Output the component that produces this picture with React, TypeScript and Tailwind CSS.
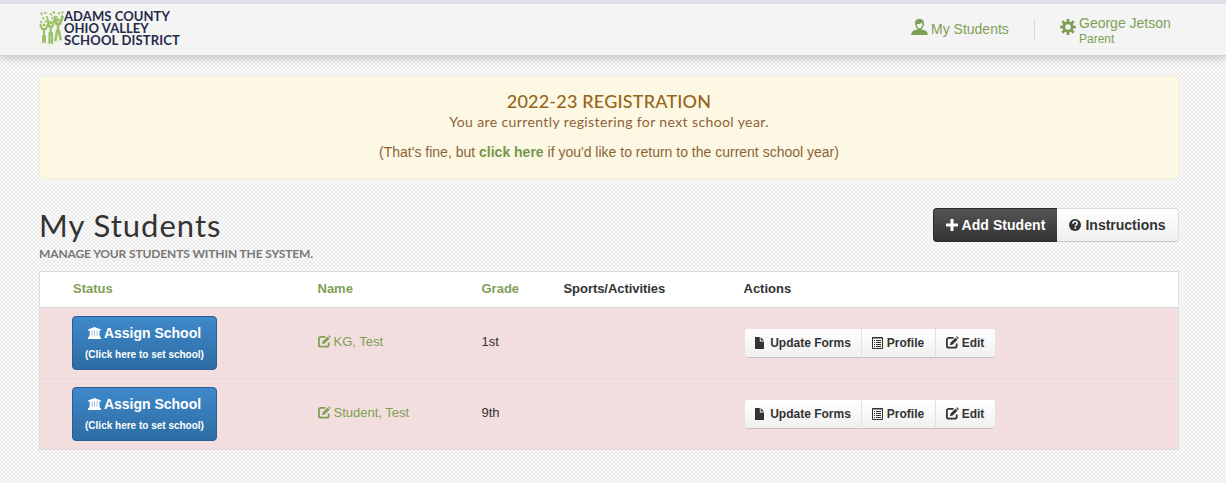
import type { ReactNode } from 'react';

type IconProps = { className?: string };

const students = [
  { id: 1, name: 'KG, Test', grade: '1st' },
  { id: 2, name: 'Student, Test', grade: '9th' },
];

const pageBackground =
  'bg-[#fafafa] bg-[radial-gradient(circle_at_center,#ebebeb_0.7px,transparent_1.1px),radial-gradient(circle_at_center,#ebebeb_0.7px,transparent_1.1px)] bg-size-[4px_4px] bg-position-[0_0,2px_2px]';

function UserIcon({ className }: IconProps) {
  return (
    <svg className={className} viewBox="0 0 17 16" fill="currentColor">
      <path d="M8.500 0C5.200 0 3.900 1.900 4.200 4.400c-.5.4-.3 1.700.5 2.300.3 1.500 1 2.500 1.800 3.200v.6C4.500 11 .2 11 .2 15.900h16.600c0-4.900-4.300-4.900-6.300-5.400v-.6c.8-.7 1.500-1.700 1.800-3.200.8-.6 1-1.900.5-2.300C13.100 1.900 11.800 0 8.500 0Z" />
      <path
        d="M5.800 4.900c2 .2 3.900-.3 4.800-1.200.1.600.4 1 .8 1.200-.1 2.700-1.400 4.400-2.900 4.400S5.900 7.600 5.800 4.900Z"
        fill="#f4f4f4"
      />
    </svg>
  );
}

function CogIcon({ className }: IconProps) {
  return (
    <svg className={className} viewBox="0 0 16 16" fill="none" stroke="currentColor">
      <circle cx="8" cy="8" r="4.300" strokeWidth="3" />
      <path
        d="M8 0v3M8 13v3M0 8h3M13 8h3M2.300 2.300l2.200 2.200M11.500 11.500l2.200 2.200M2.300 13.700l2.200-2.200M11.500 4.500l2.200-2.200"
        strokeWidth="2.700"
      />
    </svg>
  );
}

function SchoolIcon({ className }: IconProps) {
  return (
    <svg className={className} viewBox="0 0 13 12" fill="currentColor">
      <path d="M6.500 0L13 2.500v1H0v-1zM1.600 3.400h2.200V9H1.600zM4.300 3.400h2V9h-2zM6.800 3.400h2V9h-2zM9.300 3.400h2.200V9H9.300zM1 8.800h11v1.400H1zM0 10.300h13V12H0z" />
    </svg>
  );
}

function EditIcon({ className }: IconProps) {
  return (
    <svg className={className} viewBox="0 0 13 13" fill="none" stroke="currentColor">
      <path d="M7.500 1.900H2.900C1.600 1.900.9 2.600.9 3.900v5.800c0 1.300.7 2 2 2h5.800c1.300 0 2-.7 2-2V7.600" strokeWidth="1.800" />
      <path d="M4 9.200l.6-2.600 4.900-4.900 2 2-4.900 4.900z" fill="currentColor" stroke="none" />
      <path d="M10.100 1.100l.9-.9 1.900 1.900-.9.900z" fill="currentColor" stroke="none" />
    </svg>
  );
}

function FileIcon({ className }: IconProps) {
  return (
    <svg className={className} viewBox="0 0 9 12" fill="currentColor">
      <path d="M0 0h4.800v4.500H9V12H0zM5.700 0L9 3.600H5.700z" />
    </svg>
  );
}

function ListIcon({ className }: IconProps) {
  return (
    <svg className={className} viewBox="0 0 12 12" fill="none" stroke="currentColor">
      <path d="M.5.5h10v11H.5zM0 1h11" />
      <path d="M2 3.500h1M4 3.500h5M2 5.500h1M4 5.500h5M2 7.500h1M4 7.500h5M2 9.500h1M4 9.500h5" />
    </svg>
  );
}

function PlusIcon({ className }: IconProps) {
  return (
    <svg className={className} viewBox="0 0 12 12" fill="currentColor">
      <path d="M4.500 0h3v4.500H12v3H7.500V12h-3V7.500H0v-3h4.500z" />
    </svg>
  );
}

function QuestionIcon({ className }: IconProps) {
  return (
    <svg className={className} viewBox="0 0 12 12" fill="none">
      <circle cx="6" cy="6" r="6" fill="#333" />
      <path d="M3.900 4.700c0-1.400.8-2.100 2.100-2.100s2.200.7 2.200 1.800c0 1.400-1.900 1.500-1.900 2.800" stroke="#fff" strokeWidth="1.500" />
      <path d="M5.400 8.200h1.700v1.600H5.400z" fill="#fff" />
    </svg>
  );
}

function DistrictLogo() {
  return (
    <svg className="h-[36px] w-[25px]" viewBox="0 0 25 36" fill="none" stroke="#9ac068" strokeLinecap="round">
      {/* Leaves */}
      <g fill="#98c163" stroke="none">
        <path d="M1 1.500l3 .5-1.500 3zM5.500.5l3 1.500-3 1.500zM10 3l2.500-1 .5 3zM13.500 0l3 1-2 2.500zM18 2l3-1v3zM22 0l3 1-2 2.500zM2.500 7L5 6l.5 3zM6.500 5l3 .5L8 8.500zM12 6l2.500.5-1.500 2.500zM16.500 4.500L19 6l-2 2zM.5 10l3 .5L2 13zM8.500 9l2 .5-1 2zM21 5l3-1v3zM.5 15l1.500.5-1 1.500zM5.500 9.500l2 .5-1.500 2z" />
        <circle cx="5" cy="14" r="1.500" />
        <circle cx="11.700" cy="11.500" r="1.600" />
        <circle cx="19" cy="9" r="1.800" />
      </g>
      {/* Figures */}
      <path d="M1.500 14l1.500 4h4l1.500-4M5 18v7M4 25v6M6 25v6" strokeWidth="2" />
      <path d="M8.500 8.500l1.500 7h3.500l1.500-6M11.700 16v7M10.500 22v10M13 22v10" strokeWidth="2.200" />
      <path d="M15.500 6l2 7H21l2.500-7M19 13v8M18 20l-1.500 9M20 20l1.500 8" strokeWidth="2.500" />
      {/* Ground */}
      <path d="M.5 32l6 .5 4.500 3 5-4.500 7-1.500" stroke="#dbe8c9" strokeWidth="1" />
    </svg>
  );
}

function ActionButton({ className, children }: { className: string; children: ReactNode }) {
  return (
    <button
      className={`flex h-[29px] items-center justify-center border-[#e2e0e0] border-b border-b-[#c6c2c2] bg-linear-to-b from-white to-[#f0f0f0] text-[12px] font-bold text-[#333] ${className}`}
    >
      {children}
    </button>
  );
}

function Header() {
  return (
    <header className="relative flex h-[56px] justify-between border-t-4 border-b border-t-[#dde0e7] border-b-[#d2d2d2] bg-[#f4f4f4] pr-[55px] pl-[39px] shadow-[0_2px_9px_rgba(0,0,0,0.2)]">
      <div className="flex pt-[7px]">
        <DistrictLogo />
        <div className="-mt-px font-['Lato',sans-serif] text-[13px] leading-[12px] font-bold whitespace-nowrap text-[#252b4b]">
          <div className="tracking-[0.08px]">ADAMS COUNTY</div>
          <div className="tracking-[0.05px]">OHIO VALLEY</div>
          <div className="tracking-[0.16px]">SCHOOL DISTRICT</div>
        </div>
      </div>

      <nav className="flex text-[#7f9f56]">
        <a className="flex pt-[16px]" href="#">
          <UserIcon className="-mt-px mr-[3px] h-[16px] w-[17px]" />
          <span className="w-[78px] text-[14px] leading-[19px] whitespace-nowrap">My Students</span>
        </a>
        <div className="mt-[15px] ml-[25px] h-[21px] w-px bg-[#d9d9d9]" />
        <a className="ml-[25px] flex pt-[10px]" href="#">
          <CogIcon className="mt-[5px] mr-[3px] size-[16px]" />
          <span className="w-[92px] whitespace-nowrap">
            <span className="block text-[14px] leading-[18px]">George Jetson</span>
            <span className="block text-[12px] leading-[14px]">Parent</span>
          </span>
        </a>
      </nav>
    </header>
  );
}

export default function App() {
  return (
    <div className={`h-[483px] overflow-hidden font-['Liberation_Sans',Arial,sans-serif] text-[#333] ${pageBackground}`}>
      <Header />

      <main className="mx-auto mt-[20px] w-[1140px] -translate-x-[4px]">
        {/* Registration notice */}
        <section className="h-[103px] rounded-[4px] border border-[#f8eed3] bg-[#fcf8e3] pt-[13px] text-center text-[#8c6239]">
          <h2 className="font-['Lato',sans-serif] text-[18px] leading-[22px] font-medium tracking-[0.2px] text-[#96641c]">
            2022-23 REGISTRATION
          </h2>
          <p className="-mt-px font-['Lato',sans-serif] text-[14px] leading-[21px] tracking-[0.39px]">
            You are currently registering for next school year.
          </p>
          <p className="mt-[10px] text-[14px] leading-[20px]">
            (That's fine, but{' '}
            <a className="font-bold text-[#76964e]" href="#">
              click here
            </a>{' '}
            if you'd like to return to the current school year)
          </p>
        </section>

        <div className="mt-[27px] flex h-[65px] justify-between">
          <div className="font-['Lato',sans-serif] whitespace-nowrap">
            <h1 className="text-[31px] leading-[38px] tracking-[1px]">My Students</h1>
            <p className="mt-px text-[12px] leading-[18px] font-bold tracking-[-0.13px] text-[#777]">
              MANAGE YOUR STUDENTS WITHIN THE SYSTEM.
            </p>
          </div>
          <div className="mt-[2px] flex h-[34px] text-[14px] font-bold whitespace-nowrap">
            <button className="flex w-[124px] items-center justify-center gap-[4px] rounded-l-[4px] border border-r-0 border-[#2b2b2b] bg-linear-to-b from-[#555] to-[#333] text-white">
              <PlusIcon className="size-[12px]" />
              <span className="tracking-[0.05px]">Add Student</span>
            </button>
            <button className="flex w-[122px] items-center justify-center gap-[4px] rounded-r-[4px] border border-l-0 border-[#dedede] border-b-[#c5c5c5] bg-linear-to-b from-white to-[#f0f0f0]">
              <QuestionIcon className="size-[12px]" />
              <span>Instructions</span>
            </button>
          </div>
        </div>

        {/* Students */}
        <table className="w-[1140px] table-fixed border-collapse border border-[#dcdcdc] bg-white text-left">
          <colgroup>
            <col className="w-[262px]" />
            <col className="w-[172px]" />
            <col className="w-[82px]" />
            <col className="w-[181px]" />
            <col />
          </colgroup>
          <thead>
            <tr className="h-[36px] text-[13px]">
              <th className="pb-px pl-[33px] text-[#7f9f56]">Status</th>
              <th className="pb-px pl-[16px] text-[#7f9f56]">Name</th>
              <th className="pb-px pl-[8px] text-[#7f9f56]">Grade</th>
              <th className="pb-px pl-[8px] tracking-[-0.05px]">Sports/Activities</th>
              <th className="pb-px pl-[7px]">Actions</th>
            </tr>
          </thead>
          <tbody>
            {students.map((student) => (
              <tr key={student.id} className="h-[71px] border-t border-[#e6d9da] bg-[#f2dede] text-[13px]">
                <td className="pl-[32px]">
                  <button className="flex h-[54px] w-[145px] flex-col items-center rounded-[4px] border border-[#2b5f91] bg-linear-to-b from-[#3f89ca] to-[#2d6ca3] pt-[6px] font-bold text-white">
                    <span className="flex items-center gap-[3px] text-[14px] leading-[20px] whitespace-nowrap">
                      <SchoolIcon className="h-[12px] w-[13px]" />
                      <span>Assign School</span>
                    </span>
                    <span className="mt-[4px] text-[10px] leading-[16px] whitespace-nowrap">
                      (Click here to set school)
                    </span>
                  </button>
                </td>
                <td className="pb-[3px] pl-[16px] text-[#7f9f56]">
                  <a className="flex items-center gap-[3px]" href="#">
                    <EditIcon className="size-[13px]" />
                    {student.name}
                  </a>
                </td>
                <td className="pb-[3px] pl-[8px]">{student.grade}</td>
                <td></td>
                <td className="pl-[8px]">
                  <div className="flex whitespace-nowrap">
                    <ActionButton className="w-[117px] gap-[6px] rounded-l-[3px] border-r pl-px">
                      <FileIcon className="h-[12px] w-[9px]" />
                      Update Forms
                    </ActionButton>
                    <ActionButton className="w-[74px] gap-[3px] border-r">
                      <ListIcon className="size-[12px]" />
                      Profile
                    </ActionButton>
                    <ActionButton className="w-[59px] gap-[3px] rounded-r-[3px]">
                      <EditIcon className="size-[13px]" />
                      Edit
                    </ActionButton>
                  </div>
                </td>
              </tr>
            ))}
          </tbody>
        </table>
      </main>
    </div>
  );
}
